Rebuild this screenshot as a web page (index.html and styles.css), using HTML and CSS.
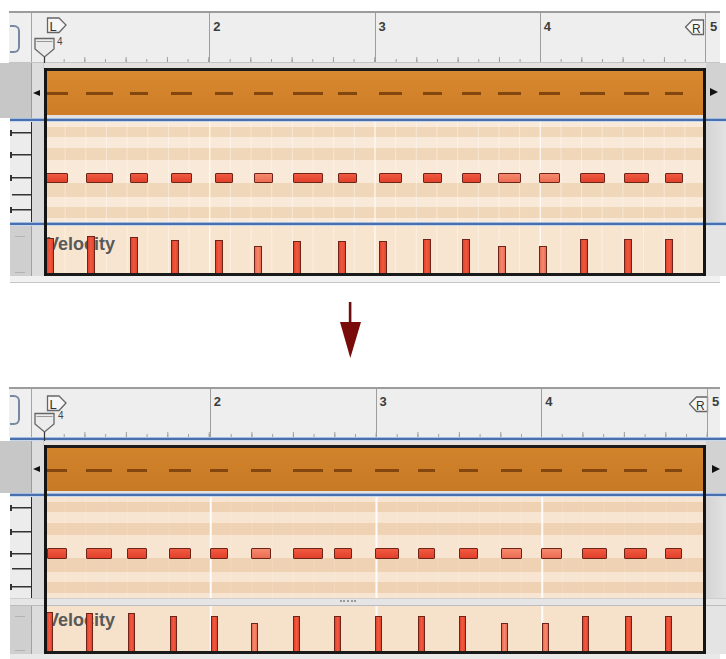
FILE: index.html
```html
<!DOCTYPE html>
<html>
<head>
<meta charset="utf-8">
<title>Piano roll</title>
<link rel="stylesheet" href="styles.css">
</head>
<body>

<section class="panel panel-a">
  <div class="row ruler">
    <div class="lcell"><span class="bracket"></span></div>
    <div class="track">
      <div class="bar first">
        <svg class="lmark" width="22" height="17" viewBox="0 0 22 17"><path d="M1.5 1H13L20 8L13 15.5H1.5Z" fill="#f6f6f6" stroke="#666" stroke-width="1.3"/><text x="3.5" y="13.5" font-family="Liberation Sans, sans-serif" font-size="13" fill="#333">L</text></svg>
        <svg class="pmark" width="23" height="32" viewBox="0 0 23 32"><path d="M2 1.5H21V12L11.5 20L2 12Z" fill="#ececec" stroke="#666" stroke-width="1.3"/><path d="M3.5 4.5H19.5" stroke="#999" stroke-width="1"/><path d="M11.5 20V32" stroke="#333" stroke-width="1.2"/></svg>
        <span class="four">4</span>
      </div>
      <div class="bar"><span class="num">2</span></div>
      <div class="bar"><span class="num">3</span></div>
      <div class="bar"><span class="num">4</span>
        <svg class="rmark" width="21" height="17" viewBox="0 0 21 17"><path d="M19.5 1H8.5L1.5 8L8.5 15.5H19.5Z" fill="#f6f6f6" stroke="#666" stroke-width="1.3"/><text x="8" y="13.5" font-family="Liberation Sans, sans-serif" font-size="12" fill="#333">R</text></svg>
      </div>
      <div class="bar last"><span class="num">5</span></div>
    </div>
  </div>

  <div class="row cliprow">
    <div class="lcell"></div>
    <div class="gut"><span class="tri-left"></span></div>
    <div class="canvas clipwrap">
      <div class="clip">
        <i class="dash" style="left:2px;width:22px"></i>
        <i class="dash" style="left:42px;width:27px"></i>
        <i class="dash" style="left:86px;width:18px"></i>
        <i class="dash" style="left:127px;width:21px"></i>
        <i class="dash" style="left:171px;width:18px"></i>
        <i class="dash" style="left:210px;width:19px"></i>
        <i class="dash" style="left:249px;width:30px"></i>
        <i class="dash" style="left:294px;width:19px"></i>
        <i class="dash" style="left:335px;width:23px"></i>
        <i class="dash" style="left:379px;width:19px"></i>
        <i class="dash" style="left:418px;width:19px"></i>
        <i class="dash" style="left:454px;width:23px"></i>
        <i class="dash" style="left:495px;width:21px"></i>
        <i class="dash" style="left:536px;width:25px"></i>
        <i class="dash" style="left:580px;width:25px"></i>
        <i class="dash" style="left:621px;width:18px"></i>
      </div>
    </div>
    <div class="rcell"><span class="tri-right"></span></div>
  </div>

  <div class="blue"></div>

  <div class="row notesrow">
    <div class="lcell keys">
      <span class="key"></span><span class="key"></span><span class="key"></span><span class="key plain"></span><span class="key"></span>
    </div>
    <div class="gut"></div>
    <div class="canvas notes">
      <i class="note" style="left:2px;width:22px"></i>
      <i class="note" style="left:42px;width:27px"></i>
      <i class="note" style="left:86px;width:18px"></i>
      <i class="note" style="left:127px;width:21px"></i>
      <i class="note" style="left:171px;width:18px"></i>
      <i class="note soft" style="left:210px;width:19px"></i>
      <i class="note" style="left:249px;width:30px"></i>
      <i class="note" style="left:294px;width:19px"></i>
      <i class="note" style="left:335px;width:23px"></i>
      <i class="note" style="left:379px;width:19px"></i>
      <i class="note" style="left:418px;width:19px"></i>
      <i class="note soft" style="left:454px;width:23px"></i>
      <i class="note soft" style="left:495px;width:21px"></i>
      <i class="note" style="left:536px;width:25px"></i>
      <i class="note" style="left:580px;width:25px"></i>
      <i class="note" style="left:621px;width:18px"></i>
    </div>
    <div class="rcell"></div>
  </div>

  <div class="blue"><span class="bgrip"></span></div>

  <div class="row velrow">
    <div class="lcell"><span class="vtick"></span><span class="vtick low"></span></div>
    <div class="gut"></div>
    <div class="canvas vel">
      <span class="vlabel">Velocity</span>
      <i class="vbar" style="left:2px;height:35px"></i>
      <i class="vbar" style="left:43px;height:37px"></i>
      <i class="vbar" style="left:86px;height:36px"></i>
      <i class="vbar" style="left:127px;height:33px"></i>
      <i class="vbar" style="left:171px;height:33px"></i>
      <i class="vbar soft" style="left:210px;height:27px"></i>
      <i class="vbar" style="left:249px;height:32px"></i>
      <i class="vbar" style="left:294px;height:32px"></i>
      <i class="vbar" style="left:335px;height:32px"></i>
      <i class="vbar" style="left:379px;height:34px"></i>
      <i class="vbar" style="left:418px;height:34px"></i>
      <i class="vbar soft" style="left:454px;height:27px"></i>
      <i class="vbar soft" style="left:495px;height:27px"></i>
      <i class="vbar" style="left:536px;height:34px"></i>
      <i class="vbar" style="left:580px;height:34px"></i>
      <i class="vbar" style="left:621px;height:34px"></i>
    </div>
    <div class="rcell"></div>
  </div>
  <div class="foot"></div>

  <span class="vline play"></span>
  <span class="vline end"></span>
</section>

<div class="arrow">
  <svg width="30" height="60" viewBox="0 0 30 60"><rect x="12.8" y="2" width="2.6" height="22" fill="#6e0d0d"/><path d="M4 22H25L14.3 58Z" fill="#7a0b0b"/></svg>
</div>

<section class="panel panel-b">
  <div class="row ruler">
    <div class="lcell"><span class="bracket"></span></div>
    <div class="track">
      <div class="bar first">
        <svg class="lmark" width="22" height="17" viewBox="0 0 22 17"><path d="M1.5 1H13L20 8L13 15.5H1.5Z" fill="#f6f6f6" stroke="#666" stroke-width="1.3"/><text x="3.5" y="13.5" font-family="Liberation Sans, sans-serif" font-size="13" fill="#333">L</text></svg>
        <svg class="pmark" width="23" height="34" viewBox="0 0 23 34"><path d="M2 1.5H21V12L11.5 20L2 12Z" fill="#ececec" stroke="#666" stroke-width="1.3"/><path d="M3.5 4.5H19.5" stroke="#999" stroke-width="1"/><path d="M11.5 20V34" stroke="#333" stroke-width="1.2"/></svg>
        <span class="four">4</span>
      </div>
      <div class="bar"><span class="num">2</span></div>
      <div class="bar"><span class="num">3</span></div>
      <div class="bar"><span class="num">4</span>
        <svg class="rmark" width="21" height="17" viewBox="0 0 21 17"><path d="M19.5 1H8.5L1.5 8L8.5 15.5H19.5Z" fill="#f6f6f6" stroke="#666" stroke-width="1.3"/><text x="8" y="13.5" font-family="Liberation Sans, sans-serif" font-size="12" fill="#333">R</text></svg>
      </div>
      <div class="bar last"><span class="num">5</span></div>
    </div>
  </div>

  <div class="blue"></div>

  <div class="row cliprow">
    <div class="lcell"></div>
    <div class="gut"><span class="tri-left"></span></div>
    <div class="canvas clipwrap">
      <div class="clip">
        <i class="dash" style="left:3px;width:20px"></i>
        <i class="dash" style="left:42px;width:26px"></i>
        <i class="dash" style="left:83px;width:20px"></i>
        <i class="dash" style="left:125px;width:22px"></i>
        <i class="dash" style="left:166px;width:18px"></i>
        <i class="dash" style="left:207px;width:20px"></i>
        <i class="dash" style="left:249px;width:30px"></i>
        <i class="dash" style="left:290px;width:18px"></i>
        <i class="dash" style="left:331px;width:24px"></i>
        <i class="dash" style="left:374px;width:17px"></i>
        <i class="dash" style="left:415px;width:19px"></i>
        <i class="dash" style="left:457px;width:21px"></i>
        <i class="dash" style="left:497px;width:21px"></i>
        <i class="dash" style="left:538px;width:25px"></i>
        <i class="dash" style="left:580px;width:23px"></i>
        <i class="dash" style="left:621px;width:17px"></i>
      </div>
    </div>
    <div class="rcell"><span class="tri-right"></span></div>
  </div>

  <div class="blue"></div>

  <div class="row notesrow">
    <div class="lcell keys">
      <span class="key"></span><span class="key"></span><span class="key"></span><span class="key plain"></span><span class="key"></span>
    </div>
    <div class="gut"></div>
    <div class="canvas notes">
      <i class="note" style="left:3px;width:20px"></i>
      <i class="note" style="left:42px;width:26px"></i>
      <i class="note" style="left:83px;width:20px"></i>
      <i class="note" style="left:125px;width:22px"></i>
      <i class="note" style="left:166px;width:18px"></i>
      <i class="note soft" style="left:207px;width:20px"></i>
      <i class="note" style="left:249px;width:30px"></i>
      <i class="note" style="left:290px;width:18px"></i>
      <i class="note" style="left:331px;width:24px"></i>
      <i class="note" style="left:374px;width:17px"></i>
      <i class="note" style="left:415px;width:19px"></i>
      <i class="note soft" style="left:457px;width:21px"></i>
      <i class="note soft" style="left:497px;width:21px"></i>
      <i class="note" style="left:538px;width:25px"></i>
      <i class="note" style="left:580px;width:23px"></i>
      <i class="note" style="left:621px;width:17px"></i>
    </div>
    <div class="rcell"></div>
  </div>

  <div class="sep"><span class="grip"></span></div>

  <div class="row velrow">
    <div class="lcell"><span class="vtick"></span><span class="vtick low"></span></div>
    <div class="gut"></div>
    <div class="canvas vel">
      <span class="vlabel">Velocity</span>
      <i class="vbar" style="left:2px;height:39px"></i>
      <i class="vbar" style="left:42px;height:38px"></i>
      <i class="vbar" style="left:84px;height:38px"></i>
      <i class="vbar" style="left:126px;height:35px"></i>
      <i class="vbar" style="left:167px;height:35px"></i>
      <i class="vbar soft" style="left:207px;height:28px"></i>
      <i class="vbar" style="left:249px;height:35px"></i>
      <i class="vbar" style="left:290px;height:35px"></i>
      <i class="vbar" style="left:331px;height:35px"></i>
      <i class="vbar" style="left:374px;height:35px"></i>
      <i class="vbar" style="left:415px;height:35px"></i>
      <i class="vbar soft" style="left:457px;height:28px"></i>
      <i class="vbar soft" style="left:498px;height:28px"></i>
      <i class="vbar" style="left:538px;height:35px"></i>
      <i class="vbar" style="left:581px;height:35px"></i>
      <i class="vbar" style="left:621px;height:35px"></i>
    </div>
    <div class="rcell"></div>
  </div>
  <div class="foot"></div>

  <span class="vline play"></span>
  <span class="vline end"></span>
</section>

</body>
</html>
```

FILE: styles.css
```css
* { box-sizing: border-box; }
html, body { margin: 0; padding: 0; background: #ffffff; }
body {
  width: 726px;
  height: 659px;
  overflow: hidden;
  font-family: "Liberation Sans", Arial, sans-serif;
}

.panel { position: relative; width: 726px; }
.panel-a { margin-top: 11px; --bar: 165.25px; }
.panel-b { --bar: 165.75px; }

.row { display: flex; }
.lcell { width: 32px; flex: none; border-right: 1px solid #a8a8a8; }
.gut { width: 12px; flex: none; }
.canvas { width: 662px; flex: none; position: relative; }
.rcell { width: 20px; flex: none; }

/* ---------- ruler ---------- */
.ruler {
  margin: 0 6px 0 9px;
  border-top: 2px solid #9c9c9c;
  background: #eeeeee;
}
.panel-a .ruler { height: 52px; border-bottom: 1px solid #c4c4c4; }
.panel-b .ruler { height: 50px; }
.ruler .lcell { width: 23px; border-right-color: #a4a4a4; background: #efefef; }
.bracket {
  display: block;
  margin: 12px 0 0 1px;
  width: 10px;
  height: 28px;
  border: 2px solid #7789a2;
  border-left: none;
  border-radius: 0 6px 6px 0;
}
.panel-b .bracket { margin-top: 6px; height: 30px; }

.track { flex: 1; display: flex; padding-left: 12px; }
.bar {
  position: relative;
  flex: none;
  width: var(--bar);
  border-left: 1px solid #9e9e9e;
  background-image:
    linear-gradient(to right, #a0a0a0 1px, transparent 1px),
    linear-gradient(to right, #a0a0a0 1px, transparent 1px);
  background-size: calc(var(--bar) / 4) 5px, calc(var(--bar) / 8) 3px;
  background-repeat: repeat-x;
  background-position: -1px 100%, -1px 100%;
}
.bar.first { border-left: none; }
.bar.last { flex: 1; width: auto; background-image: none; }
.num {
  display: block;
  padding: 7px 0 0 3px;
  font-size: 13px;
  line-height: 13px;
  font-weight: bold;
  color: #3c3c3c;
}
.panel-b .num { padding-top: 6px; }
.bar.last .num { padding-left: 4px; }

.lmark { position: absolute; left: 2px; top: 4px; }
.pmark { position: absolute; left: -11px; top: 24px; overflow: visible; }
.four { position: absolute; left: 13px; top: 24px; font-size: 10px; line-height: 10px; color: #444; }
.rmark { position: absolute; right: 0; top: 6px; }
.panel-b .lmark { top: 6px; }
.panel-b .pmark { top: 23px; }
.panel-b .four { top: 22px; left: 14px; }
.panel-b .rmark { right: -2px; top: 7px; }

/* ---------- clip row ---------- */
.panel-a .cliprow { height: 55px; }
.panel-b .cliprow { height: 52px; }
.cliprow .lcell { background: #c7c7c7; border-right-color: #9b9b9b; }
.cliprow .gut { background: #dddddd; padding-top: 27px; }
.panel-b .cliprow .gut { padding-top: 25px; }
.tri-left {
  display: block;
  width: 0; height: 0;
  margin-left: 1px;
  border-right: 7px solid #111;
  border-top: 3.5px solid transparent;
  border-bottom: 3.5px solid transparent;
}
.cliprow .rcell { background: #d2d2d2; padding-top: 25px; }
.panel-b .cliprow .rcell { padding-top: 24px; }
.tri-right {
  display: block;
  width: 0; height: 0;
  margin-left: 4px;
  border-left: 8px solid #111;
  border-top: 4.5px solid transparent;
  border-bottom: 4.5px solid transparent;
}
.panel-b .tri-right { margin-left: 6px; }
.clipwrap { background: #e4e1de; padding-top: 5px; }
.panel-b .clipwrap { padding-top: 4px; }
.clip {
  position: relative;
  height: 47px;
  border-top: 3px solid #1b1b1b;
  background: linear-gradient(#d88a30, #d2822a 60%, #cd7d27);
}
.panel-b .clip { height: 46px; background: linear-gradient(#d2842d, #cc7d27 60%, #c97a26); }
.dash {
  position: absolute;
  top: 21px;
  height: 2.5px;
  background: #84460f;
}

/* ---------- blue separators ---------- */
.blue {
  height: 4px;
  margin-left: 10px;
  background: #4a6fae;
  border-top: 1px solid #a3bde0;
  border-bottom: 1px solid #c6d7ee;
}
.bgrip {
  display: block;
  margin: 3px 0 0 333px;
  width: 14px;
  border-top: 1px dotted #6f86b0;
}

/* ---------- notes ---------- */
.panel-a .notesrow { height: 100px; }
.panel-b .notesrow { height: 101px; }
.notesrow .lcell {
  background: linear-gradient(to right, #ffffff 10px, #ececec 10px);
  border-right: 1px solid #2b2b2b;
  padding-top: 8px;
}
.notesrow .gut { background: #d9d9d9; }
.notesrow .rcell { background: linear-gradient(to right, #d4d4d4, #e2e2e2); }
.key {
  display: block;
  height: 6px;
  margin-left: 10px;
  border-left: 2px solid #333;
  background: linear-gradient(#333, #333) center / 100% 1.5px no-repeat;
}
.key.plain { border-left-color: transparent; }
.panel-a .key:nth-child(2) { margin-top: 16px; }
.panel-a .key:nth-child(3) { margin-top: 17px; }
.panel-a .key:nth-child(4) { margin-top: 11px; }
.panel-a .key:nth-child(5) { margin-top: 9px; }
.panel-b .key:nth-child(2) { margin-top: 18px; }
.panel-b .key:nth-child(3) { margin-top: 16px; }
.panel-b .key:nth-child(4) { margin-top: 9px; }
.panel-b .key:nth-child(5) { margin-top: 12px; }

.notes {
  background-image:
    linear-gradient(to right, rgba(255,255,255,.85) 1px, transparent 1px),
    linear-gradient(to right, rgba(255,255,255,.38) 1px, transparent 1px),
    linear-gradient(to bottom,
      #f9e9d8 0 5px, #f1d7ba 5px 15px, #f9e9d8 15px 26px, #f1d7ba 26px 38px,
      #f9e9d8 38px 61px, #f1d7ba 61px 75px, #f9e9d8 75px 85px, #f1d7ba 85px 96px,
      #f9e9d8 96px);
  background-size: var(--bar) 100%, calc(var(--bar) / 8) 100%, 100% 100%;
}
.panel-b .notes {
  background-image:
    linear-gradient(to right, rgba(255,255,255,.9) 1.5px, transparent 1.5px),
    linear-gradient(to right, rgba(255,255,255,.12) 1px, transparent 1px),
    linear-gradient(to bottom,
      #f7e5d1 0 5px, #efd2b3 5px 15px, #f7e5d1 15px 26px, #efd2b3 26px 38px,
      #f7e5d1 38px 61px, #efd2b3 61px 75px, #f7e5d1 75px 85px, #efd2b3 85px 96px,
      #f7e5d1 96px);
}
.note {
  position: absolute;
  top: 51px;
  height: 10px;
  background: linear-gradient(#ef5a40, #e2402a);
  border: 1px solid #6e2519;
  border-radius: 1px;
}
.panel-b .note { height: 11px; }
.note.soft { background: linear-gradient(#f58a6e, #ec6c52); }

/* ---------- velocity ---------- */
.panel-a .velrow { height: 50px; }
.panel-b .velrow { height: 48px; }
.velrow .lcell {
  background: linear-gradient(to right, #ffffff 10px, #cfcfcf 10px);
  border-right: 1px solid #a0a0a0;
  padding-top: 10px;
}
.vtick { display: block; margin-left: 15px; width: 10px; height: 1px; background: #b3b3b3; }
.vtick.low { margin-top: 35px; }
.panel-b .vtick.low { margin-top: 33px; }
.velrow .gut { background: #dcdcdc; }
.velrow .rcell { background: #e4e4e4; }
.vel {
  padding: 9px 0 0 3px;
  border-bottom: 3px solid #1a1a1a;
  background-color: #f8e5cf;
  background-image:
    linear-gradient(to right, rgba(255,255,255,.85) 1px, transparent 1px),
    linear-gradient(to right, rgba(255,255,255,.4) 1px, transparent 1px);
  background-size: var(--bar) 100%, calc(var(--bar) / 8) 100%;
}
.panel-b .vel {
  padding-top: 5px;
  background-color: #f6e1ca;
  background-image: linear-gradient(to right, rgba(255,255,255,.9) 1.5px, transparent 1.5px);
  background-size: var(--bar) 100%;
}
.vlabel {
  display: block;
  font-size: 18px;
  line-height: 18px;
  font-weight: bold;
  color: #595959;
}
.vbar {
  position: absolute;
  bottom: 0;
  width: 8px;
  background: linear-gradient(to right, #e2412b, #ef5a40 50%, #e2412b);
  border: 1px solid #6e2519;
  border-bottom: none;
}
.panel-b .vbar { width: 7px; }
.vbar.soft { background: linear-gradient(to right, #ea6a50, #f58a6e 50%, #ea6a50); }

/* ---------- bottom bits ---------- */
.panel-a .foot {
  height: 7px;
  margin: 0 6px 0 10px;
  background: #f1f1f1;
  border-bottom: 1px solid #c6c6c6;
}
.panel-b .foot {
  height: 5px;
  margin: 0 6px 0 10px;
  background: #e9e9e9;
}
.sep {
  height: 8px;
  margin-left: 10px;
  background: #e5e5e5;
  border-top: 1px solid #cfcfcf;
  border-bottom: 1px solid #bcbcbc;
}
.grip {
  display: block;
  margin: 1px 0 0 330px;
  width: 16px;
  border-top: 2px dotted #9a9a9a;
}

.vline { position: absolute; width: 3px; background: #141414; }
.vline.play { left: 44px; }
.vline.end { left: 703px; }
.panel-a .vline { top: 57px; height: 208px; }
.panel-b .vline { top: 58px; height: 209px; }

/* ---------- arrow ---------- */
.arrow { height: 104px; padding: 17px 0 0 336px; }
.arrow svg { display: block; }
```
